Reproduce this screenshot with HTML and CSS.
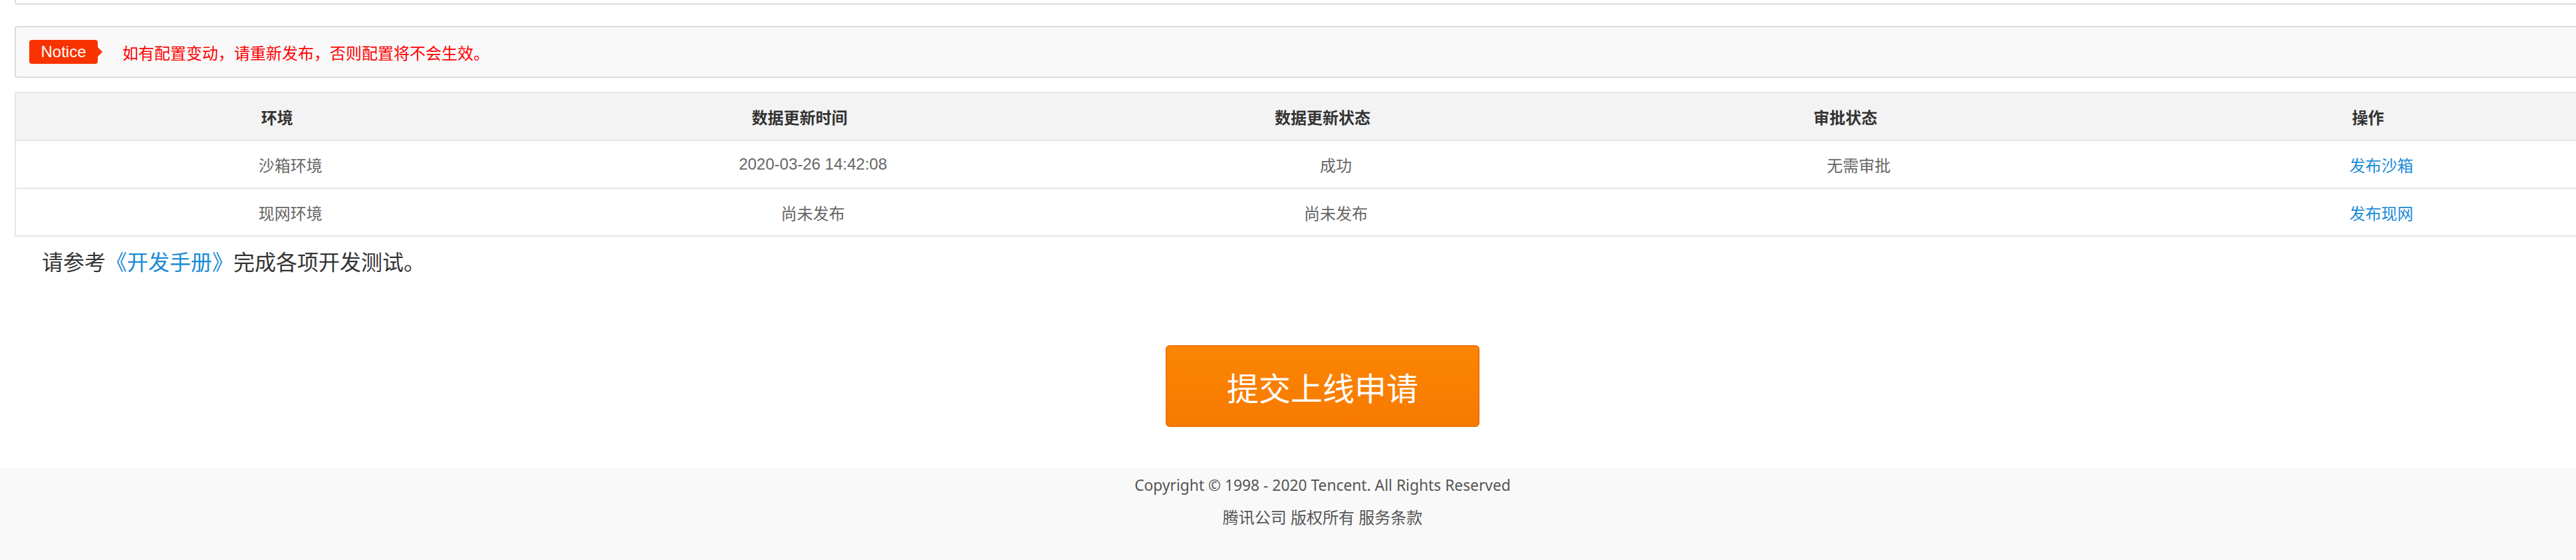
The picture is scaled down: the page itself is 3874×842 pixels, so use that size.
FILE: index.html
```html
<!DOCTYPE html>
<html lang="zh-CN">
<head>
<meta charset="utf-8">
<title>发布配置</title>
<link rel="stylesheet" href="styles.css">
</head>
<body>
<div class="page">
  <div class="main">
    <div class="top-panel"></div>
    <div class="notice">
      <span class="notice-badge">Notice</span>
      <span class="notice-text">如有配置变动，请重新发布，否则配置将不会生效。</span>
    </div>
    <table class="env-table">
      <thead>
        <tr>
          <th>环境</th>
          <th>数据更新时间</th>
          <th>数据更新状态</th>
          <th>审批状态</th>
          <th>操作</th>
        </tr>
      </thead>
      <tbody>
        <tr>
          <td>沙箱环境</td>
          <td class="num">2020-03-26 14:42:08</td>
          <td>成功</td>
          <td>无需审批</td>
          <td><a class="link" href="#">发布沙箱</a></td>
        </tr>
        <tr>
          <td>现网环境</td>
          <td>尚未发布</td>
          <td>尚未发布</td>
          <td></td>
          <td><a class="link" href="#">发布现网</a></td>
        </tr>
      </tbody>
    </table>
    <p class="hint">请参考<a class="link" href="#">《开发手册》</a>完成各项开发测试。</p>
    <div class="actions">
      <button class="submit-btn" type="button">提交上线申请</button>
    </div>
  </div>
  <footer class="footer">
    <div class="footer-line copyright">Copyright © 1998 - 2020 Tencent. All Rights Reserved</div>
    <div class="footer-line">腾讯公司 版权所有 服务条款</div>
  </footer>
</div>
</body>
</html>
```
FILE: styles.css
```css
html {
  overflow-x: hidden;
}
body {
  margin: 0;
  background: #fff;
  font-family: "Liberation Sans", "Noto Sans CJK SC", sans-serif;
  color: #333;
}
.page {
  width: 3978px;
}
.main {
  margin: 0 22px;
}
.top-panel {
  height: 5px;
  border: 2px solid #dddddd;
  border-top: none;
  border-radius: 0 0 3px 3px;
}
.notice {
  margin-top: 32px;
  height: 74px;
  border: 2px solid #dddddd;
  border-radius: 4px;
  background: #f9f9f9;
  display: flex;
  align-items: center;
  padding-left: 20px;
}
.notice-badge {
  position: relative;
  display: inline-flex;
  align-items: center;
  justify-content: center;
  width: 103px;
  height: 36px;
  background: #f83300;
  color: #fff;
  border-radius: 4px;
  font-size: 24px;
  font-family: "Liberation Sans", sans-serif;
}
.notice-badge::after {
  content: "";
  position: absolute;
  right: -7px;
  top: 11px;
  border-left: 7px solid #f83300;
  border-top: 7px solid transparent;
  border-bottom: 7px solid transparent;
}
.notice-text {
  margin-left: 37px;
  color: #ff0000;
  font-size: 24px;
  font-family: "Noto Sans CJK SC", sans-serif;
}
.env-table {
  margin-top: 21px;
  width: 100%;
  border-collapse: collapse;
  table-layout: fixed;
  border: 2px solid #e6e6e6;
  font-size: 24px;
}
.env-table th {
  height: 70px;
  background: #f3f3f3;
  color: #333;
  font-weight: bold;
  text-align: center;
  padding: 0;
  font-family: "Noto Sans CJK SC", sans-serif;
}
.env-table td {
  height: 70px;
  text-align: center;
  color: #666;
  padding: 0 0 0 40px;
  border-top: 2px solid #e6e6e6;
  font-family: "Liberation Sans", "Noto Sans CJK SC", sans-serif;
}
.link {
  color: #1a8bd6;
  text-decoration: none;
}
.hint {
  margin: 14px 0 0;
  padding-left: 41px;
  font-size: 32px;
  line-height: 44px;
  color: #333;
  font-family: "Noto Sans CJK SC", sans-serif;
}
.actions {
  margin-top: 105px;
  display: flex;
  justify-content: center;
}
.submit-btn {
  width: 472px;
  height: 123px;
  border: 2px solid #ea7408;
  border-radius: 6px;
  background: linear-gradient(#fb8502, #f77a00);
  color: #fff;
  font-size: 48px;
  font-family: "Noto Sans CJK SC", sans-serif;
  padding: 0;
}
.footer {
  margin-top: 62px;
  background: #f9f9f9;
  padding: 2px 0 60px;
  text-align: center;
  color: #555;
  font-size: 24px;
  line-height: 48px;
  font-family: "Noto Sans", "Noto Sans CJK SC", sans-serif;
}
.copyright {
  font-size: 22.8px;
}
```
